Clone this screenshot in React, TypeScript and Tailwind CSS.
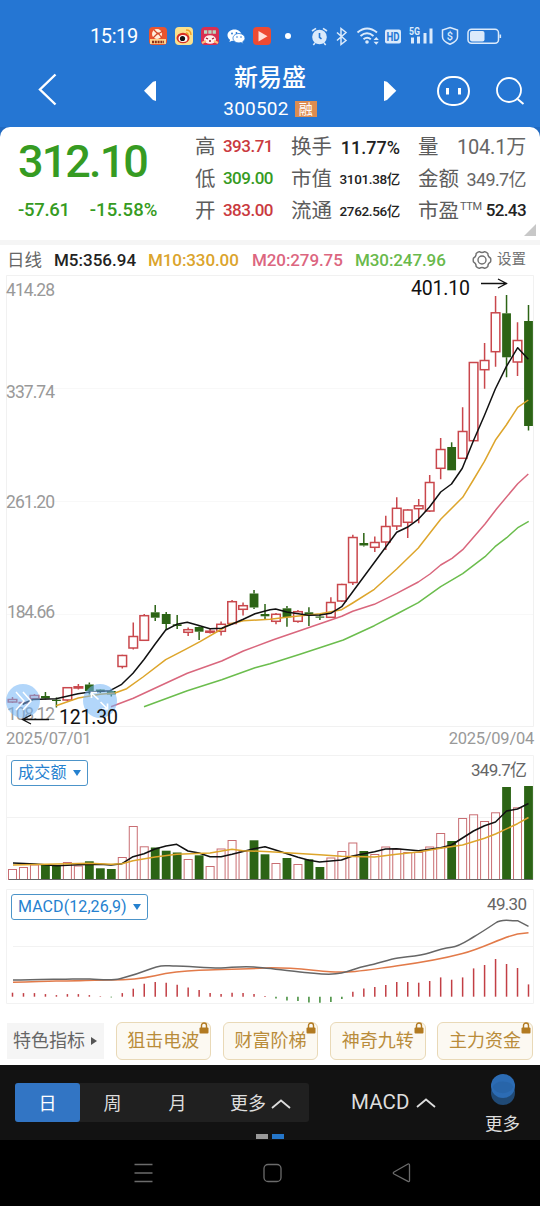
import { ReactNode } from 'react';
import clsx from 'clsx';

const FONT = "font-['Roboto','Noto_Sans_CJK_SC',sans-serif]";

// [up, bodyTop, bodyBottom, wickTop, wickBottom]
const candles: [number, number, number, number, number][] = [
  [1, 699.5, 702, 697, 703], [1, 702.5, 703, 702, 704], [1, 695.5, 698.5, 694, 699], [0, 696, 698.5, 692, 699.5],
  [0, 699.7, 701, 697.5, 707.5], [1, 687.7, 700, 687.7, 701], [1, 686.8, 688, 684, 689.5], [0, 684.5, 691, 682.5, 694.5],
  [0, 689.5, 692, 689, 693], [0, 691, 694.5, 690, 696.5], [1, 655.5, 666.5, 654.7, 668.5], [1, 636.5, 648, 622.5, 649.5],
  [1, 615.7, 640.3, 614, 641], [0, 612.3, 617.7, 605, 621], [0, 614, 624, 612, 630], [0, 624.3, 626, 615, 629],
  [1, 629.7, 632.3, 627.5, 636], [0, 627, 631.7, 626.5, 640], [1, 631.2, 632.3, 628.5, 633.5], [1, 624.3, 631.3, 621.5, 635.5],
  [1, 601.7, 623.5, 600, 624.5], [1, 605.7, 609.3, 602.5, 615.5], [0, 593.5, 607.5, 590, 609], [0, 614, 616.3, 604, 620],
  [1, 614.3, 621.3, 613, 624.3], [0, 608.3, 617.3, 606, 626.7], [1, 611.7, 621.3, 610, 622.7], [0, 612.3, 614.5, 607.3, 626],
  [0, 616.5, 617.7, 614, 620], [1, 602.5, 617.3, 597.3, 618], [1, 584.5, 601, 583.7, 602], [1, 537.5, 582.5, 534.7, 585],
  [0, 543, 545.5, 533, 546.5], [1, 542.5, 547.3, 536.5, 552], [1, 526.5, 542, 515.7, 550], [1, 508.3, 526, 497.3, 530],
  [1, 510, 522.3, 509.3, 538], [1, 505.8, 508.7, 499, 523.3], [1, 482.5, 511, 475, 512], [1, 449.5, 468.3, 438, 479.3],
  [0, 447, 470.3, 442.3, 470.3], [1, 431.5, 458.3, 407.3, 459], [1, 362.5, 440.7, 362, 441], [1, 360.5, 369.7, 343, 388.7],
  [1, 312.8, 351.7, 296, 366.8], [0, 313.3, 357.3, 295, 377.3], [1, 340.5, 362, 322.3, 376], [0, 321, 426, 305, 430.5],
];

const volumes = [
  869.5, 867.5, 865, 864.3, 865, 862.5, 866, 861.3, 868.3, 869, 857.5, 826.5, 846.8, 847.5, 850.7, 852.5,
  859.5, 855.3, 866.5, 849, 840.5, 851, 840.3, 854.3, 863.5, 858, 864.5, 859.3, 867, 858, 851.5, 843,
  851, 854.5, 847, 849.2, 852.5, 852.5, 847, 833.5, 841, 818.5, 814.8, 821.5, 812.8, 787, 807.8, 786,
];

const macd = [
  4, 3.6, 3.6, 2.6, 1.6, 2.6, 2.6, 1.6, 0.5, -0.7, 3.6, 8, 13, 14.7, 14, 12,
  9.3, 6.7, 3.6, 2.6, 4, 3.6, 2.6, 0.7, -1.7, -3.7, -4.3, -5.7, -6, -5.3, -2.3, 5,
  8.3, 9.7, 11.7, 14.7, 14.7, 14, 15.7, 19.3, 17, 19.3, 28.3, 31.7, 37.7, 32.7, 28.7, 12.3,
];

const x = (i: number) => 12.5 + (i * 516) / 47;

const ma5 = '22.7,704.5 27,702 33,699.5 56,698.7 78,693.7 90,692 110,690.7 121.7,684.3 133,673.3 144,659.5 155,644.3 165.7,630 176.7,624.3 187.3,622.3 198,625.3 210,628.7 221.7,628.3 232.3,624 243.3,619.3 255,613.7 270,609.7 275.7,609 286.7,612 308.3,615.3 320,615 330.7,613.3 341.7,606.7 352.7,591.7 396.7,532.3 407.3,527.3 418.3,519.3 429.3,507.3 440.7,492 451.5,484 462.3,468.3 473.3,441 484.3,415.7 495.3,389 506.3,366.7 517.7,347.7 528.3,359.3';
const ma10 = '56,705.7 78.3,698 100,694.3 115,693 126.7,688.7 143,677 165.7,659.7 185,649.7 200,641.7 221.7,629 230,624 243.3,620.7 270,619.3 286.7,617.3 320,613.7 341.7,609.7 352.7,603 374.3,589.3 396.7,569 418.3,548 440.7,519.3 462.7,497.3 473.3,480 484.3,461.7 495.3,440.3 506.3,425 517.7,407.3 528.3,400';
const ma20 = '111,706.7 133.3,698.3 166.7,682.7 187.3,673.3 221.7,661 243.3,651 273.3,639.7 308.3,627.7 341.7,616.3 352.7,611.3 374.3,604.3 396.7,593.3 418.3,582 430,574 440.7,565 452,558.3 462.7,549.7 485,524 496.7,508.7 517.7,483.7 528.3,474';
const ma30 = '144,706.7 187.3,690.7 221.7,679.7 255,667.7 270,663.7 300,654.3 343.3,640 374.3,625.7 396.7,614 418.3,602.7 440.7,586.7 462.7,573.7 485,556.7 495,546.7 506.7,537.7 518.3,527.3 528.7,521.3';
const vol5 = '13,863 35,864 57,865.7 78,864.7 100,864.3 111,865 122,863.7 133,856.7 144,853.7 155,849 166,846 176.7,844.3 188,851 199,853 210,856.7 221,856.7 232,854.3 254,848.7 265,846.7 275.5,850 298,857.3 309,860.3 319.5,862 341.5,860 352.5,856 374.5,851.7 385.5,849 396.5,848.7 418.5,850.7 440.5,847.7 451.5,845 473.5,831 484.5,825.7 495.5,822 506.5,811 517.5,809 528.5,803.5';
const vol10 = '13,865 57,864 89,863.3 111,864.3 122,863.7 133,860.7 155,857 176.7,854.3 210,853 232,849.3 243,850.7 270,851.7 319.5,854.7 341.5,856.3 374.5,857 396.5,854.3 418.5,852 440.5,848.3 462.5,845 484.5,838.3 495.5,834 517.5,823.7 528.5,817.5';
const dif = 'M13 980 C35 980.5 43 979 56 979.3 S78 978.5 90 979 S111 981 120 978.7 S140 973 151 968.7 S165 966 176 966 S210 968.3 221 968 S240 966 254 967 S295 971.5 308 972.7 S330 975.5 341.5 973 S355 968 367 965.7 S388 959.5 398 958 S420 956 429 953 S443 948.5 451.5 947.3 S465 942 473.5 937 S488 928 495.5 923 S510 921.5 517.5 920.7 L528.5 926.3';
const dea = 'M13 982.3 C35 982 43 981 56 981 S100 980 111 980 S140 979 155 975.7 S180 971 199 970.3 S243 969 265 968 S308 970 330 971.7 S370 969.5 396 966 S440 959.5 462.5 953.5 S500 938 517.5 934 L528.5 932.7';

const RED = '#c9474c';
const GREEN = '#2c6415';
const line = { fill: 'none', strokeWidth: 1.5, strokeLinejoin: 'round' as const };

function StatusBar() {
  return (
    <div className="flex h-[54px] items-center pt-[18px] pl-[90px] text-white">
      <span className="w-[59px] text-[20px] leading-9 tracking-[-0.4px]">15:19</span>
      <svg className="shrink-0" width="124" height="20" viewBox="149 26 124 20">
        <rect x="149" y="27" width="18" height="18" rx="4" fill="#e9552f" />
        <circle cx="157" cy="34" r="5" fill="#fff1dc" />
        <path d="M154 30l4 4 5-3M153 38l5-5 4 5" stroke="#d44827" strokeWidth="1.2" fill="none" />
        <path d="M150 41.500h16" stroke="#ffd18a" strokeWidth="5" />
        <path d="M152 42h12" stroke="#8d2d15" strokeWidth="2.500" strokeDasharray="2 .8" />
        <rect x="175" y="27" width="18" height="18" rx="4" fill="#fbe08c" />
        <ellipse cx="183" cy="38" rx="6.5" ry="5.2" fill="#d93025" />
        <ellipse cx="183" cy="38.5" rx="4.5" ry="3.5" fill="#fff" />
        <circle cx="182.5" cy="38.5" r="2.6" fill="#111" />
        <path d="M186 30q5 0 5 5M186 33q2 0 2 2" stroke="#ef9c27" strokeWidth="1.4" fill="none" />
        <rect x="201" y="27" width="18" height="18" rx="4" fill="#d92f50" />
        <path d="M204 32h12" stroke="#b9d8c0" strokeWidth="3.500" strokeDasharray="3.3 1" />
        <ellipse cx="210" cy="39.5" rx="6" ry="4.3" fill="#fff0ec" />
        <path d="M206 38l2 1M214 38l-2 1M209 41h2" stroke="#a11b33" strokeWidth="1.3" />
        <path d="M202 43l4-2M218 43l-4-2" stroke="#ffc078" strokeWidth="2" />
        <path d="M234.500 29.500c-4 0-7 2.500-7 5.800 0 1.900 1 3.500 2.600 4.500l-.7 2.200 2.600-1.300c.8.200 1.600.3 2.500.3 4 0 7-2.500 7-5.700s-3-5.800-7-5.800z" fill="#fff" />
        <path d="M239 33.500c-3.300 0-6 2.100-6 4.700s2.700 4.700 6 4.700c.7 0 1.400-.1 2-.3l2.300 1.100-.6-1.900c1.400-.9 2.300-2.200 2.300-3.600 0-2.600-2.700-4.700-6-4.700z" fill="#fff" stroke="#2576d3" strokeWidth=".8" />
        <circle cx="232" cy="33.500" r=".9" fill="#2576d3" /><circle cx="236.500" cy="33" r=".9" fill="#2576d3" />
        <circle cx="237" cy="37" r=".8" fill="#2576d3" /><circle cx="241" cy="37" r=".8" fill="#2576d3" />
        <rect x="253" y="27" width="18" height="18" rx="4" fill="#ee4a32" />
        <path d="M258.500 31v10.500l9-5.200z" fill="#ffe0d8" />
      </svg>
      <i className="mr-[18px] ml-[12px] h-1.5 w-1.5 shrink-0 rounded-full bg-white" />
      <svg className="shrink-0" width="200" height="24" viewBox="309 24 200 24" fill="none" stroke="#dbeafb" strokeWidth="1.6">
        <circle cx="319.500" cy="37" r="7.300" fill="#dbeafb" stroke="none" />
        <path d="M319.500 33v4.300l2 1.500" stroke="#2576d3" />
        <path d="M312 31l4-2.700M327 31l-4-2.700M315 43l-1.700 2M324 43l1.700 2" />
        <path d="M337 32.500l9 8-5 4V28.500l5 4-9 8" strokeWidth="1.500" />
        <path d="M357.500 32.500q9.500-8 19.500 0M360.500 36q6.500-5.500 13 0M363.500 39.300q3.700-3 7.300 0" strokeWidth="2" />
        <circle cx="367" cy="42" r="1.800" fill="#dbeafb" stroke="none" />
        <path d="M373.500 40l2.800-3 2.500 3zM373.500 41.800l2.800 3 2.500-3z" fill="#dbeafb" stroke="none" />
        <rect x="385" y="29.500" width="16" height="14" rx="2" fill="#dbeafb" stroke="none" />
        <text x="386.500" y="41" fontSize="12" fontWeight="700" textLength="13" lengthAdjust="spacingAndGlyphs" fill="#2576d3" stroke="none">HD</text>
        <text x="409" y="35" fontSize="10" fontWeight="700" textLength="11" lengthAdjust="spacingAndGlyphs" fill="#dbeafb" stroke="none">5G</text>
        <path d="M412.500 37.500v6M418.500 36.500v7M425 33v10.500M431 28.500v15" strokeWidth="3" />
        <path d="M450 27.500l7.500 2.500v7q0 4-7.500 7.300q-7.500-3.300-7.500-7.300v-7z" strokeWidth="1.500" />
        <text x="450" y="40" fontSize="11" fontWeight="500" textAnchor="middle" fill="#dbeafb" stroke="none">$</text>
        <rect x="468" y="29.200" width="30.500" height="14" rx="3.500" strokeWidth="1.500" />
        <rect x="470" y="31" width="14.500" height="10.500" rx="2" fill="#dbeafb" stroke="none" />
        <path d="M500.300 34.500v3.500" />
      </svg>
    </div>
  );
}

function Header() {
  return (
    <header className="h-[127px] bg-[#2576d3] text-white">
      <StatusBar />
      <div className="flex h-[73px] items-center">
        <svg width="162" height="73" viewBox="0 54 162 73">
          <path d="M55.500 74.500L40 89.500l15.500 15" fill="none" stroke="#fff" strokeWidth="2.400" />
          <path d="M156 81v20l-3 -1-9-9.300 9-9z" fill="#fff" />
        </svg>
        <div className="flex w-[216px] flex-col items-center pt-[7px]">
          <h1 className="text-[24px] leading-[30px] font-medium">新易盛</h1>
          <div className="flex items-center gap-1.5 leading-8">
            <span className="text-[19px] tracking-[0.2px]">300502</span>
            <span className="flex h-4 w-[22px] items-center justify-center bg-[#dd8c51] text-[14px] leading-4">融</span>
          </div>
        </div>
        <svg width="162" height="73" viewBox="378 54 162 73" fill="none" stroke="#fff">
          <path d="M384 81v20l3-1 9.300-9.300-9.300-9z" fill="#fff" stroke="none" />
          <rect x="438" y="77" width="31" height="28" rx="14" strokeWidth="2" />
          <path d="M447.500 88v6.500M459.500 88v6.500" strokeWidth="3" />
          <circle cx="509" cy="90" r="12" strokeWidth="1.800" />
          <path d="M517.500 99l6 5" strokeWidth="2" />
        </svg>
      </div>
    </header>
  );
}

function Cell({ label, className, children }: { label: ReactNode; className?: string; children: ReactNode }) {
  return (
    <div className="flex items-center justify-between whitespace-nowrap">
      <span className="text-[20.500px] text-[#5c5c5c]">{label}</span>
      <span className={clsx('font-medium', className)}>{children}</span>
    </div>
  );
}

function Quote() {
  return (
    <div className="bg-[#2069c0]">
      <section className="relative flex h-[113px] rounded-t-[10px] bg-white pt-1">
        <div className="w-[195px] pl-[18px] text-[#369b22]">
          <div className="h-[62px] text-[45px] leading-[62px] font-medium tracking-[-1.900px]">312.10</div>
          <div className="flex gap-[20px] text-[18.500px] leading-[34px] font-medium tracking-[-0.300px]">
            <span>-57.61</span>
            <span className="tracking-[0.100px]">-15.58%</span>
          </div>
        </div>
        <div className="grid h-24 grid-cols-[78px_109px_108px] grid-rows-[32px_32px_32px] gap-x-[18px]">
          <Cell label="高" className="text-[17px] tracking-[-0.500px] text-[#ca3a3e]">393.71</Cell>
          <Cell label="换手" className="text-[18px] text-[#222]">11.77%</Cell>
          <Cell label="量" className="text-[20px] font-normal! tracking-[-0.200px] text-[#666]">104.1万</Cell>
          <Cell label="低" className="text-[17px] tracking-[-0.500px] text-[#369b22]">309.00</Cell>
          <Cell label="市值" className="text-[13.500px] tracking-[-0.350px] text-[#222]">3101.38亿</Cell>
          <Cell label="金额" className="text-[18px] font-normal! tracking-[-0.600px] text-[#666]">349.7亿</Cell>
          <Cell label="开" className="text-[17px] tracking-[-0.500px] text-[#ca3a3e]">383.00</Cell>
          <Cell label="流通" className="text-[13.500px] tracking-[-0.350px] text-[#222]">2762.56亿</Cell>
          <Cell
            label={<>市盈<span className="relative -top-2 ml-px text-[11px] tracking-[-0.300px]">TTM</span></>}
            className="text-[17px] tracking-[-0.600px] text-[#222]"
          >
            52.43
          </Cell>
        </div>
        <svg className="absolute right-1 bottom-1" width="12" height="12" viewBox="0 0 12 12">
          <path d="M12 0v12H0z" fill="#c8c8c8" />
        </svg>
      </section>
    </div>
  );
}

function AverageRow() {
  return (
    <div className="flex h-[30px] items-center pl-[7px] text-[17px] leading-[30px] font-medium whitespace-nowrap">
      <span className="w-[47px] text-[17.500px] font-normal text-[#666]">日线</span>
      <span className="w-[94px] text-[#222]">M5:356.94</span>
      <span className="w-[104px] tracking-[-0.100px] text-[#dba42c]">M10:330.00</span>
      <span className="w-[103px] tracking-[-0.100px] text-[#dc667f]">M20:279.75</span>
      <span className="w-[117px] tracking-[-0.100px] text-[#69b94b]">M30:247.96</span>
      <svg width="20" height="20" viewBox="0 0 20 20" fill="none" stroke="#707070" strokeWidth="1.400" strokeLinejoin="round">
        <path d="M18.600 8.200Q19 10 18.600 11.800Q15.700 13.300 15.900 16.500Q14.500 17.800 12.700 18.400Q10 16.600 7.300 18.400Q5.500 17.800 4.100 16.500Q4.300 13.300 1.400 11.800Q1 10 1.400 8.200Q4.300 6.700 4.100 3.500Q5.500 2.200 7.300 1.600Q10 3.400 12.700 1.600Q14.500 2.200 15.900 3.500Q15.700 6.700 18.600 8.200z" />
        <circle cx="10" cy="10" r="4" />
      </svg>
      <span className="ml-[5px] text-[14.500px] font-normal text-[#707070]">设置</span>
    </div>
  );
}

function PriceChart() {
  return (
    <svg className="block overflow-visible" width="540" height="452" viewBox="0 275 540 452">
      <path d="M6.500 275.500H533.500V726.500H6.500z" fill="none" stroke="#f1f1f1" />
      <path d="M7 388.500H533M7 501.500H533M7 614.500H533" stroke="#f8f8f8" />
      <g fontSize="17.500" fill="#999">
        <text x="6" y="296" textLength="49">414.28</text>
        <text x="6" y="398" textLength="49">337.74</text>
        <text x="6" y="508" textLength="49">261.20</text>
        <text x="7" y="618" textLength="48">184.66</text>
        <text x="7" y="720" textLength="48">108.12</text>
      </g>
      {candles.map(([up, top, bottom, high, low], i) => (
        <g key={i} stroke={up ? RED : GREEN} strokeWidth="1.500">
          <path d={`M${x(i)} ${high}V${top}M${x(i)} ${bottom}V${low}`} />
          {up
            ? <rect x={x(i) - 4.300} y={top} width="8.600" height={bottom - top} fill="none" />
            : <rect x={x(i) - 4.400} y={top} width="8.800" height={bottom - top} fill={GREEN} stroke="none" />}
        </g>
      ))}
      <polyline points={ma30} stroke="#6bbd4d" {...line} />
      <polyline points={ma20} stroke="#d9677d" {...line} />
      <polyline points={ma10} stroke="#dda52b" {...line} />
      <polyline points={ma5} stroke="#111" {...line} />
      <circle cx="23" cy="701" r="17" fill="#73b4f5" fillOpacity=".55" />
      <circle cx="100" cy="701" r="17" fill="#73b4f5" fillOpacity=".55" />
      <path d="M16 692l8 9-8 9M23 692l8 9-8 9" fill="none" stroke="#fff" strokeWidth="1.500" />
      <path d="M98.500 699.500L91.500 693M91.500 698v-5.500h5.500M100.500 702L107.500 709M107.500 703.500v5.500h-5.500" fill="none" stroke="#fff" strokeWidth="1.700" />
      <path d="M49 719.500H23M31 715l-8.500 4.500 8.500 4.500M481 283.500H507M498 279l8.500 4.500-8.500 4.500" fill="none" stroke="#111" strokeWidth="1.300" />
      <g fontSize="19.500" fill="#111">
        <text x="59" y="724" textLength="59">121.30</text>
        <text x="411" y="295" textLength="59">401.10</text>
      </g>
    </svg>
  );
}

function PickerLabel({ children }: { children: ReactNode }) {
  return (
    <button className="absolute top-[5px] left-[11px] flex h-[26px] items-center gap-[6px] rounded-[3px] border border-[#4c94c9] bg-white px-[6px] text-[16px] leading-6 text-[#2581cf]">
      {children}
      <svg width="8" height="6" viewBox="0 0 8 6"><path d="M0 0h8L4 6z" fill="#2581cf" /></svg>
    </button>
  );
}

function VolumeChart() {
  return (
    <section className="relative mt-[5px]">
      <svg className="block" width="540" height="126" viewBox="0 755 540 126">
        <path d="M6.500 880V755.500H533.500V880M7 817.500H533" fill="none" stroke="#f2f2f2" />
        {volumes.map((top, i) =>
          candles[i][0]
            ? <rect key={i} x={x(i) - 4} y={top} width="8" height={879.500 - top} fill="none" stroke="#c96e73" />
            : <rect key={i} x={x(i) - 4.400} y={top} width="8.800" height={879.500 - top} fill={GREEN} />
        )}
        <path d="M9 879.500H533" stroke="#666" />
        <polyline points={vol5} stroke="#111" {...line} />
        <polyline points={vol10} stroke="#dda52b" {...line} />
        <text x="471" y="776" fontSize="17" fill="#666" textLength="56">349.7亿</text>
      </svg>
      <PickerLabel><span className="tracking-[0.200px]">成交额</span></PickerLabel>
    </section>
  );
}

function MacdChart() {
  return (
    <section className="relative mt-2">
      <svg className="block" width="540" height="115" viewBox="0 889 540 115">
        <path d="M6.500 889.500H533.500V1003.500H6.500zM13 946.500H533" fill="none" stroke="#f2f2f2" />
        {macd.map((v, i) => (
          <path key={i} d={`M${x(i)} 996.700v${-v}`} stroke={v > 0 ? '#c23f45' : '#3d8a35'} strokeWidth="1.500" />
        ))}
        <path d={dea} stroke="#e27a49" {...line} />
        <path d={dif} stroke="#666" {...line} />
        <text x="487" y="910" fontSize="17" fill="#666" textLength="40">49.30</text>
      </svg>
      <PickerLabel><span className="tracking-[0.080px]">MACD(12,26,9)</span></PickerLabel>
    </section>
  );
}

const indicators = ['狙击电波', '财富阶梯', '神奇九转', '主力资金'];

function Indicators() {
  return (
    <div className="flex h-[61px] items-center gap-[11.500px] pt-[12px] pl-[7px]">
      <button className="flex h-9 w-[97px] items-center gap-1.5 bg-[#f5f5f5] pl-[6px] text-[18px] text-[#666]">
        特色指标
        <svg width="6" height="8" viewBox="0 0 6 8"><path d="M0 0l6 4-6 4z" fill="#555" /></svg>
      </button>
      {indicators.map(name => (
        <button key={name} className="relative h-[38px] w-[95.700px] rounded-md border border-[#e9d9b7] bg-[#fcf9f2] text-[18px] text-[#b98c3a]">
          {name}
          <svg className="absolute -top-px right-[1px]" width="10" height="12" viewBox="0 0 10 12">
            <path d="M2.500 6V3.500a2.500 2.500 0 015 0V6" fill="none" stroke="#b27a21" strokeWidth="1.400" />
            <rect x=".5" y="5.500" width="9" height="6" rx="1" fill="#b27a21" />
          </svg>
        </button>
      ))}
    </div>
  );
}

function Caret() {
  return (
    <svg width="20" height="10" viewBox="0 0 20 10"><path d="M1 9l9-7.500L19 9" fill="none" stroke="#ddd" strokeWidth="1.800" /></svg>
  );
}

function PeriodBar() {
  return (
    <div className="relative flex h-[75px] bg-[#121212] text-[#ddd]">
      <div className="mt-[18px] ml-[15px] flex h-[39px] w-[294px] items-center rounded-[3px] bg-[#202020] text-[18px]">
        <button className="h-full w-[65px] rounded-[3px] bg-[#3275c4] pt-0.5 text-white">日</button>
        <button className="w-[65px] pt-0.5">周</button>
        <button className="w-[65px] pt-0.5">月</button>
        <button className="ml-[20px] flex items-center gap-[5px] pt-0.5">更多<Caret /></button>
      </div>
      <button className="mt-[18px] ml-[42px] flex h-[39px] w-[134px] items-center gap-[6px] text-[20.500px] tracking-[0.100px]">MACD<Caret /></button>
      <button className="flex w-[35px] flex-col items-center pt-2 text-[17.500px] leading-[26px] whitespace-nowrap">
        <svg className="mb-[4px]" width="26" height="34" viewBox="0 0 26 34">
          <circle cx="13" cy="20" r="12" fill="#204a76" />
          <circle cx="13" cy="13" r="12" fill="#2c6cb4" />
          <path d="M2.500 14a11 8 0 0121 0a12 12 0 01-21 0z" fill="#2865a9" />
        </svg>
        更多
      </button>
      <i className="absolute bottom-[1px] left-[256px] h-[5px] w-3 bg-[#999]" />
      <i className="absolute bottom-[1px] left-[272px] h-[5px] w-3 bg-[#2576c9]" />
    </div>
  );
}

function SystemNav() {
  return (
    <nav className="h-[66px] bg-black">
      <svg width="540" height="66" viewBox="0 1140 540 66" fill="none" stroke="#6b6b6b" strokeWidth="1.300">
        <path d="M134.500 1164.500h18M134.500 1173h18M134.500 1181.500h18" />
        <rect x="264" y="1164.500" width="17" height="17" rx="4" />
        <path d="M409.500 1165.500v15q0 1.500-1.500.8l-14-7.300q-1.500-1 0-2l14-8q1.500-.5 1.500 1.500z" />
      </svg>
    </nav>
  );
}

export default function App() {
  return (
    <main className={clsx(FONT, 'h-[1206px] w-[540px] overflow-hidden bg-white')}>
      <Header />
      <Quote />
      <div className="h-[5px] bg-[#f5f5f5]" />
      <AverageRow />
      <PriceChart />
      <div className="flex h-[23px] justify-between pr-[6px] pl-[6px] text-[16.500px] leading-[23px] tracking-[-0.250px] text-[#999]">
        <span>2025/07/01</span>
        <span>2025/09/04</span>
      </div>
      <VolumeChart />
      <MacdChart />
      <Indicators />
      <PeriodBar />
      <SystemNav />
    </main>
  );
}
